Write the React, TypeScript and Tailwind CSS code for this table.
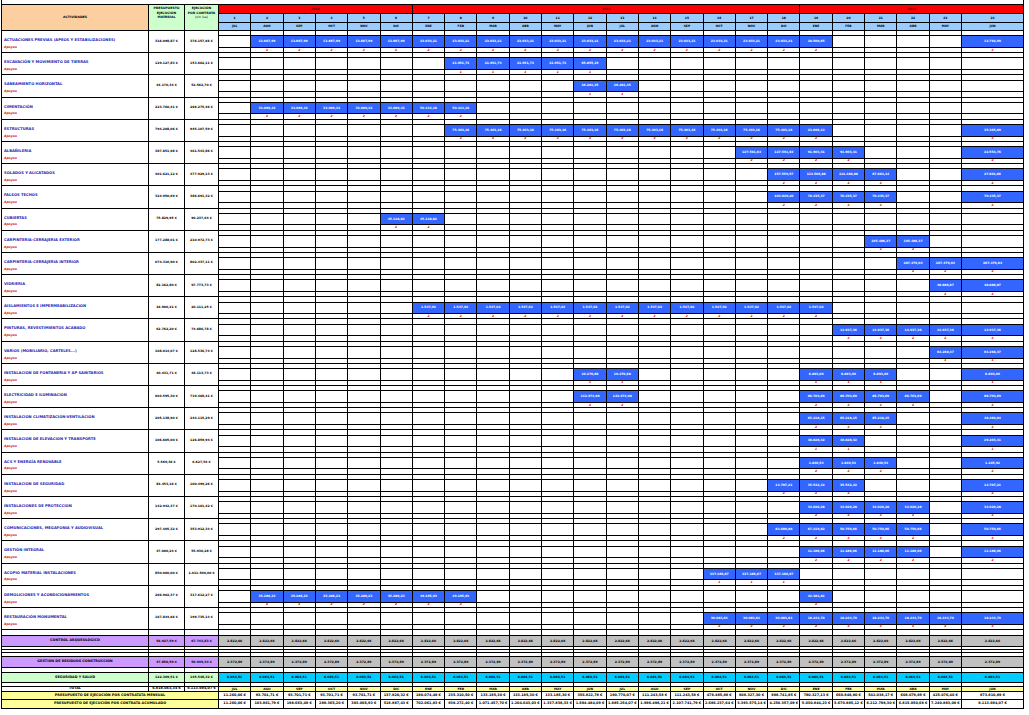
import React from "react";

// column layout shared by every band of the sheet
const COLS = "grid grid-cols-[146px_35px_33px_repeat(23,minmax(0,1fr))_61px] gap-px";

const MONTHS = ["JUL", "AGO", "SEP", "OCT", "NOV", "DIC", "ENE", "FEB", "MAR", "ABR", "MAY", "JUN", "JUL", "AGO", "SEP", "OCT", "NOV", "DIC", "ENE", "FEB", "MAR", "ABR", "MAY", "JUN"];

type Bar = [number, number, string];

interface Activity {
  name: string;
  pem: string;
  pec: string;
  bars: Bar[];
  digit?: string;
}

const activities: Activity[] = [
  { name: "ACTUACIONES PREVIAS (APEOS Y ESTABILIZACIONES)", pem: "316.098,87 €", pec: "376.157,66 €", bars: [[2, 6, "13.667,99"], [7, 18, "23.033,21"], [19, 19, "18.500,65"], [24, 24, "13.792,99"]] },
  { name: "EXCAVACIÓN Y MOVIMIENTO DE TIERRAS", pem: "129.127,83 €", pec: "153.662,11 €", bars: [[8, 11, "21.951,73"], [12, 12, "65.855,19"]], digit: "1" },
  { name: "SANEAMIENTO HORIZONTAL", pem: "44.170,34 €", pec: "52.562,70 €", bars: [[12, 13, "26.281,35"]], digit: "1" },
  { name: "CIMENTACIÓN", pem: "223.760,41 €", pec: "266.275,46 €", bars: [[2, 6, "33.089,42"], [7, 8, "50.414,18"]] },
  { name: "ESTRUCTURAS", pem: "794.208,06 €", pec: "945.107,59 €", bars: [[8, 18, "75.403,16"], [19, 19, "23.896,14"], [24, 24, "35.365,89"]] },
  { name: "ALBAÑILERIA", pem: "387.851,98 €", pec: "461.543,86 €", bars: [[17, 18, "127.591,64"], [19, 20, "91.903,41"], [24, 24, "22.553,76"]] },
  { name: "SOLADOS Y ALICATADOS", pem: "401.621,12 €", pec: "477.929,13 €", bars: [[18, 18, "157.559,57"], [19, 19, "113.506,88"], [20, 20, "112.486,88"], [21, 21, "67.664,14"], [24, 24, "27.601,66"]] },
  { name: "FALSOS TECHOS", pem: "324.950,69 €", pec: "386.691,32 €", bars: [[18, 18, "104.949,20"], [19, 21, "70.435,37"], [24, 24, "70.435,37"]] },
  { name: "CUBIERTAS", pem: "75.829,95 €", pec: "90.237,64 €", bars: [[6, 7, "45.118,82"]] },
  { name: "CARPINTERIA-CERRAJERIA EXTERIOR", pem: "177.288,01 €", pec: "210.972,73 €", bars: [[21, 22, "105.486,37"]] },
  { name: "CARPINTERIA-CERRAJERIA INTERIOR", pem: "674.316,90 €", pec: "802.437,11 €", bars: [[22, 24, "267.479,04"]] },
  { name: "VIDRIERIA", pem: "82.162,80 €", pec: "97.773,73 €", bars: [[23, 24, "48.886,87"]] },
  { name: "AISLAMIENTOS E IMPERMEABILIZACION", pem: "16.900,21 €", pec: "20.111,25 €", bars: [[7, 19, "1.547,02"]] },
  { name: "PINTURAS, REVESTIMIENTOS ACABADO", pem: "62.762,20 €", pec: "74.686,78 €", bars: [[20, 24, "14.937,36"]] },
  { name: "VARIOS (MOBILIARIO, CARTELES...)", pem: "108.014,07 €", pec: "128.536,74 €", bars: [[23, 24, "64.268,37"]], digit: "1" },
  { name: "INSTALACION DE FONTANERIA Y AP SANITARIOS", pem: "40.431,71 €", pec: "48.113,73 €", bars: [[12, 13, "10.270,68"], [19, 21, "6.893,09"], [24, 24, "6.893,09"]], digit: "1" },
  { name: "ELECTRICIDAD E ILUMINACION", pem: "604.595,30 €", pec: "719.468,41 €", bars: [[12, 13, "142.974,98"], [19, 22, "86.703,69"], [24, 24, "86.703,69"]] },
  { name: "INSTALACION CLIMATIZACION-VENTILACION", pem: "205.138,90 €", pec: "244.115,29 €", bars: [[19, 21, "65.218,15"], [24, 24, "48.460,84"]] },
  { name: "INSTALACION DE ELEVACION Y TRANSPORTE", pem: "106.605,00 €", pec: "126.859,94 €", bars: [[19, 20, "48.828,32"], [24, 24, "29.203,31"]], digit: "1" },
  { name: "ACS Y ENERGÍA RENOVABLE", pem: "5.569,36 €", pec: "6.627,54 €", bars: [[19, 21, "1.840,54"], [24, 24, "1.105,92"]] },
  { name: "INSTALACION DE SEGURIDAD", pem: "84.453,16 €", pec: "100.499,26 €", bars: [[18, 18, "14.707,21"], [19, 20, "35.542,42"], [24, 24, "14.707,21"]] },
  { name: "INSTALACIONES DE PROTECCION", pem: "142.942,37 €", pec: "170.101,42 €", bars: [[19, 22, "34.020,28"], [24, 24, "34.020,28"]] },
  { name: "COMUNICACIONES, MEGAFONIA Y AUDIOVISUAL", pem: "297.405,32 €", pec: "353.912,34 €", bars: [[18, 18, "83.689,88"], [19, 19, "67.219,82"], [20, 22, "50.750,66"], [24, 24, "50.750,66"]] },
  { name: "GESTIÓN INTEGRAL", pem: "47.000,24 €", pec: "55.930,28 €", bars: [[19, 22, "11.186,06"], [24, 24, "11.186,06"]] },
  { name: "ACOPIO MATERIAL INSTALACIONES", pem: "850.000,00 €", pec: "1.011.500,00 €", bars: [[16, 18, "337.166,67"]], digit: "1" },
  { name: "DEMOLICIONES Y ACONDICIONAMIENTOS", pem: "266.902,37 €", pec: "317.612,27 €", bars: [[2, 6, "35.286,23"], [7, 8, "49.195,93"], [19, 19, "42.381,81"]] },
  { name: "RESTAURACIÓN MONUMENTAL", pem: "167.844,66 €", pec: "199.735,14 €", bars: [[16, 18, "30.083,64"], [19, 24, "18.244,70"]] },
];

const mensual = ["11.260,06 €", "93.701,71 €", "93.701,71 €", "93.701,71 €", "93.701,71 €", "137.820,32 €", "180.074,48 €", "235.310,50 €", "133.185,30 €", "133.185,30 €", "133.185,30 €", "356.822,78 €", "190.770,07 €", "111.243,58 €", "111.243,58 €", "478.485,88 €", "808.327,30 €", "988.741,85 €", "780.327,13 €", "660.848,80 €", "542.038,17 €", "608.079,89 €", "425.076,40 €", "873.810,89 €"];

const acumulado = ["11.260,06 €", "103.861,79 €", "198.663,49 €", "289.365,20 €", "383.066,93 €", "518.887,43 €", "702.061,83 €", "938.272,40 €", "1.071.457,70 €", "1.204.643,03 €", "1.337.838,33 €", "1.694.484,09 €", "1.885.254,07 €", "1.996.498,21 €", "2.107.741,79 €", "2.686.237,64 €", "3.393.575,14 €", "4.250.357,09 €", "5.030.844,23 €", "5.670.885,12 €", "6.212.798,30 €", "6.815.850,68 €", "7.240.883,08 €", "8.113.694,07 €"];

function barsByMonth(bars: Bar[]) {
  const out: (string | null)[] = Array(24).fill(null);
  bars.forEach(([from, to, v]) => {
    for (let m = from; m <= to; m++) out[m - 1] = v;
  });
  return out;
}

function Cell({ className = "", children }: { className?: string; children?: React.ReactNode }) {
  return (
    <div className={`flex items-center justify-center overflow-visible whitespace-nowrap leading-none ${className}`}>
      {children}
    </div>
  );
}

function BlankRow({ h }: { h: string }) {
  return (
    <div className={`${COLS} ${h}`}>
      {Array.from({ length: 27 }).map((_, i) => (
        <div key={i} className="bg-white" />
      ))}
    </div>
  );
}

function Header() {
  return (
    <div className={`${COLS} grid-rows-[8px_8px_7px] font-bold`}>
      <Cell className="row-span-3 bg-[#fbcf9f] text-[3.2px]">ACTIVIDADES</Cell>
      <div className="row-span-3 bg-[#ccffcc] pt-[2px] flex flex-col items-center gap-[1.3px] text-[3.2px] leading-none">
        <span>PRESUPUESTO</span>
        <span>EJECUCIÓN</span>
        <span>MATERIAL</span>
      </div>
      <div className="row-span-3 bg-[#ccffcc] pt-[2px] flex flex-col items-center gap-[1.3px] text-[3.2px] leading-none whitespace-nowrap">
        <span>EJECUCIÓN</span>
        <span>POR CONTRATA</span>
        <span className="font-normal">(sin iva)</span>
      </div>
      <Cell className="col-span-6 bg-[#ff0000] text-[3px] text-[#400000]">2012</Cell>
      <Cell className="col-span-12 bg-[#ff0000] text-[3px] text-[#400000]">2013</Cell>
      <Cell className="col-span-6 bg-[#ff0000] text-[3px] text-[#400000]">2014</Cell>
      {MONTHS.map((_, i) => (
        <Cell key={`n${i}`} className="bg-[#99ccff] text-[3px]">
          {i + 1}
        </Cell>
      ))}
      {MONTHS.map((m, i) => (
        <Cell key={`m${i}`} className="bg-[#99ccff] text-[3px]">
          {m}
        </Cell>
      ))}
    </div>
  );
}

function ActivityBlock({ a }: { a: Activity }) {
  const cells = barsByMonth(a.bars);
  const digit = a.digit ?? "2";
  return (
    <div className={`${COLS} grid-rows-[4.3px_10.6px_4.3px]`}>
      <div className="row-span-3 bg-white pl-[2px] leading-none whitespace-nowrap">
        <div className="mt-[8px] text-[3.7px] font-bold text-[#2323b5]">{a.name}</div>
        <div className="mt-[3.2px] text-[3.1px] font-bold italic text-[#e00000]">Apoyos</div>
      </div>
      <div className="row-span-3 bg-white pt-[8.5px] text-center text-[3.1px] font-bold leading-none whitespace-nowrap">{a.pem}</div>
      <div className="row-span-3 bg-white pt-[8.5px] text-center text-[3.1px] font-bold leading-none whitespace-nowrap">{a.pec}</div>
      {cells.map((_, i) => (
        <div key={`t${i}`} className="bg-white" />
      ))}
      {cells.map((v, i) =>
        v ? (
          <Cell key={`b${i}`} className="bg-[#3366ff] text-white text-[3px] font-bold">
            {v}
          </Cell>
        ) : (
          <div key={`b${i}`} className="bg-white" />
        )
      )}
      {cells.map((v, i) => (
        <Cell key={`d${i}`} className="bg-white text-[3px] italic font-bold text-[#e00000]">
          {v ? digit : null}
        </Cell>
      ))}
    </div>
  );
}

function SummaryRow({ h, label, pem, pec, value, left, right }: { h: string; label: string; pem: string; pec: string; value: string; left: string; right: string }) {
  return (
    <div className={`${COLS} ${h} font-bold text-[3.1px]`}>
      <Cell className={`${left} text-[3.4px]`}>{label}</Cell>
      <Cell className={left}>{pem}</Cell>
      <Cell className={left}>{pec}</Cell>
      {MONTHS.map((_, i) => (
        <Cell key={i} className={right}>
          {value}
        </Cell>
      ))}
    </div>
  );
}

export default function App() {
  return (
    <div className="w-[1029px] h-[715px] overflow-hidden bg-white text-black font-['DejaVu_Sans',sans-serif]">
      <div className="ml-px w-[1023px] h-[4px] border-x border-black" />
      <div className="ml-px w-[1023px] bg-black p-px flex flex-col gap-px">
        <Header />
        {activities.map((a) => (
          <ActivityBlock key={a.name} a={a} />
        ))}
        <BlankRow h="h-[5px]" />
        <SummaryRow h="h-[10px]" label="CONTROL ARQUEOLÓGICO" pem="56.927,59 €" pec="67.743,83 €" value="2.822,66" left="bg-[#cc99ff]" right="bg-[#c0c0c0]" />
        <BlankRow h="h-[2px]" />
        <BlankRow h="h-[2px]" />
        <BlankRow h="h-[3px]" />
        <SummaryRow h="h-[10px]" label="GESTION DE RESIDUOS CONSTRUCCION" pem="47.856,59 €" pec="56.949,34 €" value="2.372,89" left="bg-[#cc99ff]" right="bg-[#c0c0c0]" />
        <BlankRow h="h-[4px]" />
        <SummaryRow h="h-[9px]" label="SEGURIDAD Y SALUD" pem="122.309,51 €" pec="145.548,32 €" value="6.064,51" left="bg-[#ccffcc]" right="bg-[#00ccff]" />
        <BlankRow h="h-[3px]" />
        <div className={`${COLS} h-[4px] font-bold text-[3.4px]`}>
          <Cell className="bg-white">TOTAL</Cell>
          <Cell className="bg-white">6.818.063,34 €</Cell>
          <Cell className="bg-white">8.113.694,07 €</Cell>
          {MONTHS.map((m, i) => (
            <Cell key={i} className="bg-[#ffff99] text-[3.1px]">
              {m}
            </Cell>
          ))}
        </div>
        <div className={`${COLS} h-[7px] font-bold text-[3.4px]`}>
          <Cell className="col-span-3 bg-[#ffff99]">PRESUPUESTO DE EJECUCIÓN POR CONTRATATA MENSUAL</Cell>
          {mensual.map((v, i) => (
            <Cell key={i} className="bg-white">
              {v}
            </Cell>
          ))}
        </div>
        <div className={`${COLS} h-[8px] font-bold text-[3.4px]`}>
          <Cell className="col-span-3 bg-[#ffff99]">PRESUPUESTO DE EJECUCIÓN POR CONTRATA ACUMULADO</Cell>
          {acumulado.map((v, i) => (
            <Cell key={i} className="bg-white">
              {v}
            </Cell>
          ))}
        </div>
      </div>
    </div>
  );
}
